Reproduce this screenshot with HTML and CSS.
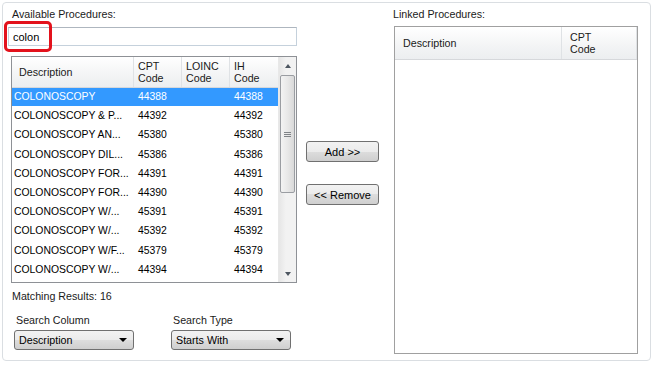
FILE: index.html
```html
<!DOCTYPE html>
<html lang="en">
<head>
  <meta charset="UTF-8">
  <title>Procedures</title>
  <link rel="stylesheet" href="styles.css">
</head>
<body>
  <div class="panel">
    <!-- Available procedures -->
    <div class="left-col">
      <div class="label">Available Procedures:</div>
      <div class="search-wrap">
        <input class="search-input" type="text" value="colon">
        <div class="highlight"></div>
      </div>

      <div class="grid available">
        <div class="grid-body">
          <div class="grid-head">
            <div class="cell c-desc">Description</div>
            <div class="cell c-code">CPT<br>Code</div>
            <div class="cell c-code">LOINC<br>Code</div>
            <div class="cell c-code last">IH<br>Code</div>
          </div>
          <div class="row selected"><div class="cell c-desc">COLONOSCOPY</div><div class="cell c-code">44388</div><div class="cell c-code"></div><div class="cell c-code">44388</div></div>
          <div class="row"><div class="cell c-desc">COLONOSCOPY &amp; P...</div><div class="cell c-code">44392</div><div class="cell c-code"></div><div class="cell c-code">44392</div></div>
          <div class="row"><div class="cell c-desc">COLONOSCOPY AN...</div><div class="cell c-code">45380</div><div class="cell c-code"></div><div class="cell c-code">45380</div></div>
          <div class="row"><div class="cell c-desc">COLONOSCOPY DIL...</div><div class="cell c-code">45386</div><div class="cell c-code"></div><div class="cell c-code">45386</div></div>
          <div class="row"><div class="cell c-desc">COLONOSCOPY FOR...</div><div class="cell c-code">44391</div><div class="cell c-code"></div><div class="cell c-code">44391</div></div>
          <div class="row"><div class="cell c-desc">COLONOSCOPY FOR...</div><div class="cell c-code">44390</div><div class="cell c-code"></div><div class="cell c-code">44390</div></div>
          <div class="row"><div class="cell c-desc">COLONOSCOPY W/...</div><div class="cell c-code">45391</div><div class="cell c-code"></div><div class="cell c-code">45391</div></div>
          <div class="row"><div class="cell c-desc">COLONOSCOPY W/...</div><div class="cell c-code">45392</div><div class="cell c-code"></div><div class="cell c-code">45392</div></div>
          <div class="row"><div class="cell c-desc">COLONOSCOPY W/F...</div><div class="cell c-code">45379</div><div class="cell c-code"></div><div class="cell c-code">45379</div></div>
          <div class="row"><div class="cell c-desc">COLONOSCOPY W/...</div><div class="cell c-code">44394</div><div class="cell c-code"></div><div class="cell c-code">44394</div></div>
        </div>
        <!-- Scrollbar -->
        <div class="scrollbar">
          <div class="arrow up"></div>
          <div class="track">
            <div class="thumb"><span class="grip"></span></div>
          </div>
          <div class="arrow down"></div>
        </div>
      </div>

      <div class="results">Matching Results: 16</div>

      <div class="search-options">
        <div class="option">
          <div class="option-label">Search Column</div>
          <div class="select">Description<span class="caret"></span></div>
        </div>
        <div class="option">
          <div class="option-label">Search Type</div>
          <div class="select">Starts With<span class="caret"></span></div>
        </div>
      </div>
    </div>

    <!-- Add / remove buttons -->
    <div class="mid-col">
      <button class="btn">Add &gt;&gt;</button>
      <button class="btn">&lt;&lt; Remove</button>
    </div>

    <!-- Linked procedures -->
    <div class="right-col">
      <div class="label">Linked Procedures:</div>
      <div class="grid linked">
        <div class="grid-head">
          <div class="cell l-desc">Description</div>
          <div class="cell l-code">CPT<br>Code</div>
        </div>
      </div>
    </div>
  </div>
</body>
</html>
```

FILE: styles.css
```css
body {
  margin: 0;
  background: #ffffff;
  font-family: 'Liberation Sans', Arial, sans-serif;
  font-size: 10.7px;
  color: #1a1a1a;
}

.panel {
  margin: 2px 0 0 2px;
  width: 649px;
  height: 359px;
  box-sizing: border-box;
  border: 1px solid #dadee2;
  border-radius: 4px;
  padding: 4px 0 0 5px;
  display: flex;
}

.label {
  height: 14px;
  line-height: 14px;
  padding-left: 4px;
}

/* Left column */
.left-col {
  width: 289px;
  display: flex;
  flex-direction: column;
}

.search-wrap {
  position: relative;
  margin-top: 6px;
}

.search-input {
  display: block;
  width: 289px;
  height: 19px;
  box-sizing: border-box;
  border: 1px solid #c5d1dc;
  border-top-color: #aeb6bf;
  padding: 0 4px;
  font-family: inherit;
  font-size: 11px;
  color: #000;
  outline: none;
}

.highlight {
  position: absolute;
  left: -4px;
  top: -6px;
  width: 48px;
  height: 31px;
  box-sizing: border-box;
  border: 3px solid #e3121c;
  border-radius: 5px;
}

/* Grids */
.grid {
  border: 1px solid #8e9196;
  background: #fff;
  box-sizing: border-box;
  overflow: hidden;
}

.grid.available {
  margin: 10px 0 0 3px;
  width: 286px;
  height: 227px;
  display: flex;
}

.grid-body {
  flex: 1;
  overflow: hidden;
}

.grid-head {
  display: flex;
  height: 31px;
  box-sizing: border-box;
  background: linear-gradient(#ffffff, #f3f4f5 60%, #eceef0);
  border-bottom: 1px solid #d6d8db;
}

.grid-head .cell {
  border-right: 1px solid #dfe2e5;
  display: flex;
  align-items: center;
  line-height: 12px;
}

.grid-head .cell.last {
  border-right: none;
}

.cell {
  box-sizing: border-box;
  white-space: nowrap;
  overflow: hidden;
}

.c-desc {
  width: 122px;
  padding-left: 2px;
}

.grid-head .c-desc {
  padding-left: 7px;
}

.c-code {
  width: 48px;
  padding-left: 4px;
}

.row {
  display: flex;
  height: 19.2px;
  line-height: 18px;
  font-size: 10.4px;
  color: #000;
}

.row.selected {
  background: linear-gradient(#3399ff 0, #3399ff 18px, #fff 18px);
  color: #fff;
}

/* Scrollbar */
.scrollbar {
  width: 17px;
  display: flex;
  flex-direction: column;
  background: linear-gradient(90deg, #e6e6e6, #f2f2f2 40%, #f2f2f2);
  border-left: 1px solid #e8e8e8;
}

.arrow {
  height: 17px;
  display: flex;
  align-items: center;
  justify-content: center;
}

.arrow::after {
  content: '';
  border-left: 3px solid transparent;
  border-right: 3px solid transparent;
}

.arrow.up::after {
  border-bottom: 4px solid #4d5660;
}

.arrow.down::after {
  border-top: 4px solid #4d5660;
}

.track {
  flex: 1;
  padding: 1px 0 0 0;
}

.thumb {
  margin: 0 1px;
  height: 116px;
  border: 1px solid #9a9da2;
  border-radius: 2px;
  background: linear-gradient(90deg, #f3f3f3, #e8e8e8 50%, #d9d9d9);
  display: flex;
  align-items: center;
  justify-content: center;
}

.grip {
  width: 7px;
  height: 5px;
  border-top: 1px solid #7f8387;
  border-bottom: 1px solid #7f8387;
  position: relative;
  box-sizing: border-box;
}

.grip::after {
  content: '';
  position: absolute;
  left: 0;
  right: 0;
  top: 1px;
  border-top: 1px solid #7f8387;
}

.results {
  margin: 6px 0 0 4px;
  height: 14px;
  line-height: 14px;
}

.search-options {
  display: flex;
  margin: 10px 0 0 6px;
  gap: 37px;
}

.option-label {
  padding-left: 2px;
  height: 14px;
  line-height: 14px;
}

.select {
  margin-top: 3px;
  width: 120px;
  height: 20px;
  box-sizing: border-box;
  border: 1px solid #707070;
  border-radius: 3px;
  background: linear-gradient(#f2f2f2 0, #ebebeb 50%, #dddddd 50%, #cfcfcf 100%);
  padding: 0 6px 0 4px;
  line-height: 18px;
  display: flex;
  justify-content: space-between;
  align-items: center;
  color: #000;
}

.caret {
  border-left: 4px solid transparent;
  border-right: 4px solid transparent;
  border-top: 4px solid #000;
}

/* Buttons */
.mid-col {
  width: 73px;
  margin-left: 9px;
  padding-top: 134px;
  display: flex;
  flex-direction: column;
  gap: 22px;
}

.btn {
  height: 21px;
  width: 73px;
  border: 1px solid #707070;
  border-radius: 3px;
  background: linear-gradient(#f2f2f2 0, #ebebeb 50%, #dddddd 50%, #cfcfcf 100%);
  font-family: inherit;
  font-size: 11px;
  color: #000;
  padding: 0;
}

/* Right column */
.right-col {
  margin-left: 14px;
  width: 245px;
  display: flex;
  flex-direction: column;
}

.right-col .label {
  padding-left: 0;
}

.grid.linked {
  margin: 5px 0 0 1px;
  width: 244px;
  height: 328px;
  border-color: #a0a0a0;
}

.grid.linked .grid-head {
  height: 33px;
}

.l-desc {
  width: 167px;
  padding-left: 8px;
}

.l-code {
  flex: 1;
  padding-left: 8px;
}
```
